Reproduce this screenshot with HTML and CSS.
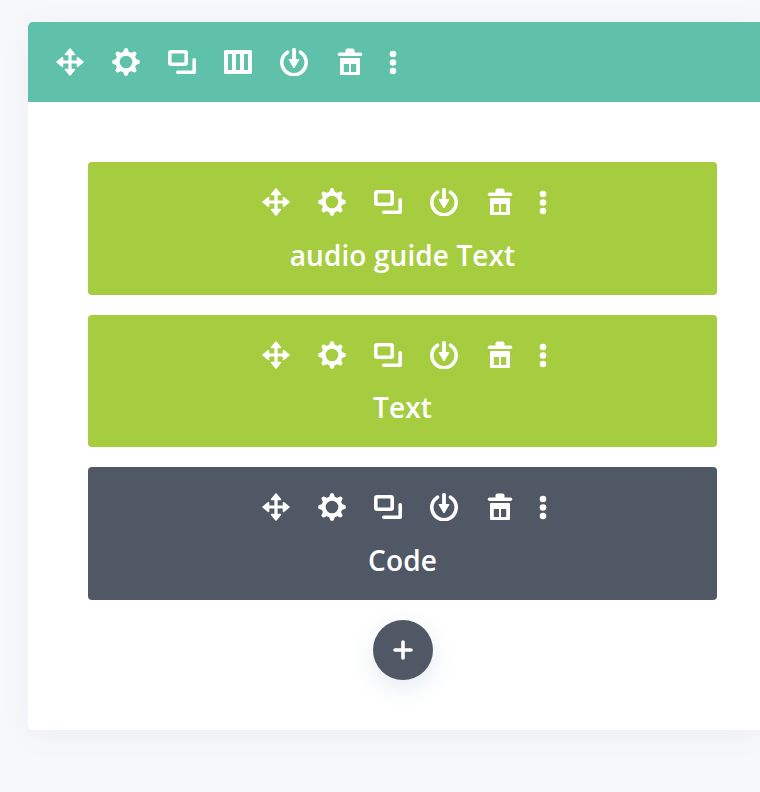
FILE: index.html
```html
<!DOCTYPE html>
<html>
    <head>
        <meta charset="utf-8" />
        <title>Section</title>
        <link rel="stylesheet" href="styles.css">
    </head>

    <body>
      <svg class="sprites" width="0" height="0">
        <symbol id="i-move" viewBox="0 0 28 28">
          <path d="M14 4V24M4 14H24" stroke="currentColor" stroke-width="3.200" fill="none"/>
          <path d="M14 1L18.500 6.500H9.500ZM14 27L9.500 21.500H18.500ZM1 14L6.500 9.500V18.500ZM27 14L21.500 18.500V9.500Z" fill="currentColor" stroke="currentColor" stroke-width="1.600" stroke-linejoin="round"/>
        </symbol>
        <symbol id="i-gear" viewBox="0 0 28 28">
          <circle cx="14" cy="14" r="8.400" fill="none" stroke="currentColor" stroke-width="4.200"/>
          <g fill="currentColor" stroke="currentColor" stroke-width="1.400" stroke-linejoin="round">
            <path d="M11.500 5L13 1H15L16.500 5Z"/>
            <path transform="rotate(45 14 14)" d="M11.500 5L13 1H15L16.500 5Z"/>
            <path transform="rotate(90 14 14)" d="M11.500 5L13 1H15L16.500 5Z"/>
            <path transform="rotate(135 14 14)" d="M11.500 5L13 1H15L16.500 5Z"/>
            <path transform="rotate(180 14 14)" d="M11.500 5L13 1H15L16.500 5Z"/>
            <path transform="rotate(225 14 14)" d="M11.500 5L13 1H15L16.500 5Z"/>
            <path transform="rotate(270 14 14)" d="M11.500 5L13 1H15L16.500 5Z"/>
            <path transform="rotate(315 14 14)" d="M11.500 5L13 1H15L16.500 5Z"/>
          </g>
        </symbol>
        <symbol id="i-clone" viewBox="0 0 28 28">
          <rect x="1.800" y="3.800" width="16.400" height="12.400" rx="1.500" fill="none" stroke="currentColor" stroke-width="3.600"/>
          <path d="M9.800 24.200H26.200V11.800" fill="none" stroke="currentColor" stroke-width="3.600" stroke-linecap="round" stroke-linejoin="round"/>
        </symbol>
        <symbol id="i-columns" viewBox="0 0 28 28">
          <path fill-rule="evenodd" fill="currentColor" d="M1.500 2H26.500A1.500 1.500 0 0 1 28 3.500V24.500A1.500 1.500 0 0 1 26.500 26H1.500A1.500 1.500 0 0 1 0 24.500V3.500A1.500 1.500 0 0 1 1.500 2ZM4 6V22H8V6ZM12 6V22H16V6ZM20 6V22H24V6Z"/>
        </symbol>
        <symbol id="i-save" viewBox="0 0 28 28">
          <path d="M7.500 4.200A12.200 12.200 0 1 0 20.500 4.200" fill="none" stroke="currentColor" stroke-width="3.600" stroke-linecap="round"/>
          <path d="M14 1.800V13" stroke="currentColor" stroke-width="3.800" stroke-linecap="round"/>
          <path d="M9 11.500H19L14 20Z" fill="currentColor" stroke="currentColor" stroke-width="1" stroke-linejoin="round"/>
        </symbol>
        <symbol id="i-trash" viewBox="0 0 28 28">
          <path d="M3.500 6.300H24.500" stroke="currentColor" stroke-width="3.400" stroke-linecap="round"/>
          <path d="M9.500 5V2.500Q9.500 0.500 11.500 0.500H16.500Q18.500 0.500 18.500 2.500V5Z" fill="currentColor"/>
          <path fill-rule="evenodd" fill="currentColor" d="M5 10H23A1 1 0 0 1 24 11V26A1 1 0 0 1 23 27H5A1 1 0 0 1 4 26V11A1 1 0 0 1 5 10ZM7.800 16V24H13V16ZM15 16V24H20.200V16Z"/>
        </symbol>
        <symbol id="i-dots" viewBox="0 0 30 28">
          <circle cx="15" cy="6" r="3.300" fill="currentColor"/>
          <circle cx="15" cy="14.500" r="3.300" fill="currentColor"/>
          <circle cx="15" cy="23" r="3.300" fill="currentColor"/>
        </symbol>
        <symbol id="i-plus" viewBox="0 0 28 28">
          <path d="M14 6V22M6 14H22" stroke="currentColor" stroke-width="3.600" stroke-linecap="round"/>
        </symbol>
      </svg>

      <div class="section">

        <div class="row-bar">
          <div class="tools">
            <span class="tool"><svg class="ico"><use href="#i-move"/></svg></span>
            <span class="tool"><svg class="ico"><use href="#i-gear"/></svg></span>
            <span class="tool"><svg class="ico"><use href="#i-clone"/></svg></span>
            <span class="tool"><svg class="ico"><use href="#i-columns"/></svg></span>
            <span class="tool"><svg class="ico"><use href="#i-save"/></svg></span>
            <span class="tool"><svg class="ico"><use href="#i-trash"/></svg></span>
            <span class="tool tool-dots"><svg class="ico"><use href="#i-dots"/></svg></span>
          </div>
        </div>

        <div class="content">

          <div class="module green">
            <div class="tools">
              <span class="tool"><svg class="ico"><use href="#i-move"/></svg></span>
              <span class="tool"><svg class="ico"><use href="#i-gear"/></svg></span>
              <span class="tool"><svg class="ico"><use href="#i-clone"/></svg></span>
              <span class="tool"><svg class="ico"><use href="#i-save"/></svg></span>
              <span class="tool"><svg class="ico"><use href="#i-trash"/></svg></span>
              <span class="tool tool-dots"><svg class="ico"><use href="#i-dots"/></svg></span>
            </div>
            <p class="label">audio guide Text</p>
          </div>

          <div class="module green">
            <div class="tools">
              <span class="tool"><svg class="ico"><use href="#i-move"/></svg></span>
              <span class="tool"><svg class="ico"><use href="#i-gear"/></svg></span>
              <span class="tool"><svg class="ico"><use href="#i-clone"/></svg></span>
              <span class="tool"><svg class="ico"><use href="#i-save"/></svg></span>
              <span class="tool"><svg class="ico"><use href="#i-trash"/></svg></span>
              <span class="tool tool-dots"><svg class="ico"><use href="#i-dots"/></svg></span>
            </div>
            <p class="label">Text</p>
          </div>

          <div class="module dark">
            <div class="tools">
              <span class="tool"><svg class="ico"><use href="#i-move"/></svg></span>
              <span class="tool"><svg class="ico"><use href="#i-gear"/></svg></span>
              <span class="tool"><svg class="ico"><use href="#i-clone"/></svg></span>
              <span class="tool"><svg class="ico"><use href="#i-save"/></svg></span>
              <span class="tool"><svg class="ico"><use href="#i-trash"/></svg></span>
              <span class="tool tool-dots"><svg class="ico"><use href="#i-dots"/></svg></span>
            </div>
            <p class="label">Code</p>
          </div>

          <button class="add"><svg class="ico"><use href="#i-plus"/></svg></button>
        </div>
      </div>
    </body>
</html>
```

FILE: styles.css
```css
html, body{
    height: 100%;
}
body{
    margin: 0;
    background-color: #f7f8fa;
    overflow: hidden;
    font-family: "Open Sans", sans-serif;
    color: white;
}
.sprites{
    display: block;
    height: 0;
}
.section{
    width: 732px;
    margin: 22px 0 0 28px;
    background-color: white;
    border-radius: 5px 0 0 5px;
    box-shadow: 0 5px 30px rgba(43, 87, 151, 0.06);
}
.row-bar{
    height: 80px;
    padding-left: 14px;
    display: flex;
    align-items: center;
    background-color: #5fc1a9;
    border-radius: 5px 0 0 0;
}
.tools{
    display: flex;
    align-items: center;
    height: 28px;
}
.tool{
    display: flex;
    justify-content: center;
    width: 56px;
}
.tool-dots{
    width: 30px;
}
.ico{
    display: block;
    width: 28px;
    height: 28px;
}
.tool-dots .ico{
    width: 30px;
}
.content{
    width: 629px;
    padding: 60px 0 50px 60px;
    display: flex;
    flex-direction: column;
    gap: 20px;
}
.module{
    height: 132.5px;
    padding: 27px 0 0 1px;
    box-sizing: border-box;
    display: flex;
    flex-direction: column;
    align-items: center;
    border-radius: 4px;
}
.module .tools{
    margin-top: -1px;
}
.green{
    background-color: #a5cd3f;
}
.dark{
    background-color: #505866;
}
.label{
    margin: 19.500px 0 0 -1px;
    font-size: 28px;
    line-height: 38px;
    font-weight: 550;
    letter-spacing: 0.1px;
}
.add{
    align-self: center;
    width: 60px;
    height: 60px;
    margin-top: 0.500px;
    padding: 16px;
    border: none;
    border-radius: 50%;
    color: white;
    background-color: #505866;
    box-shadow: 0 8px 24px rgba(43, 87, 151, 0.12);
}
```
